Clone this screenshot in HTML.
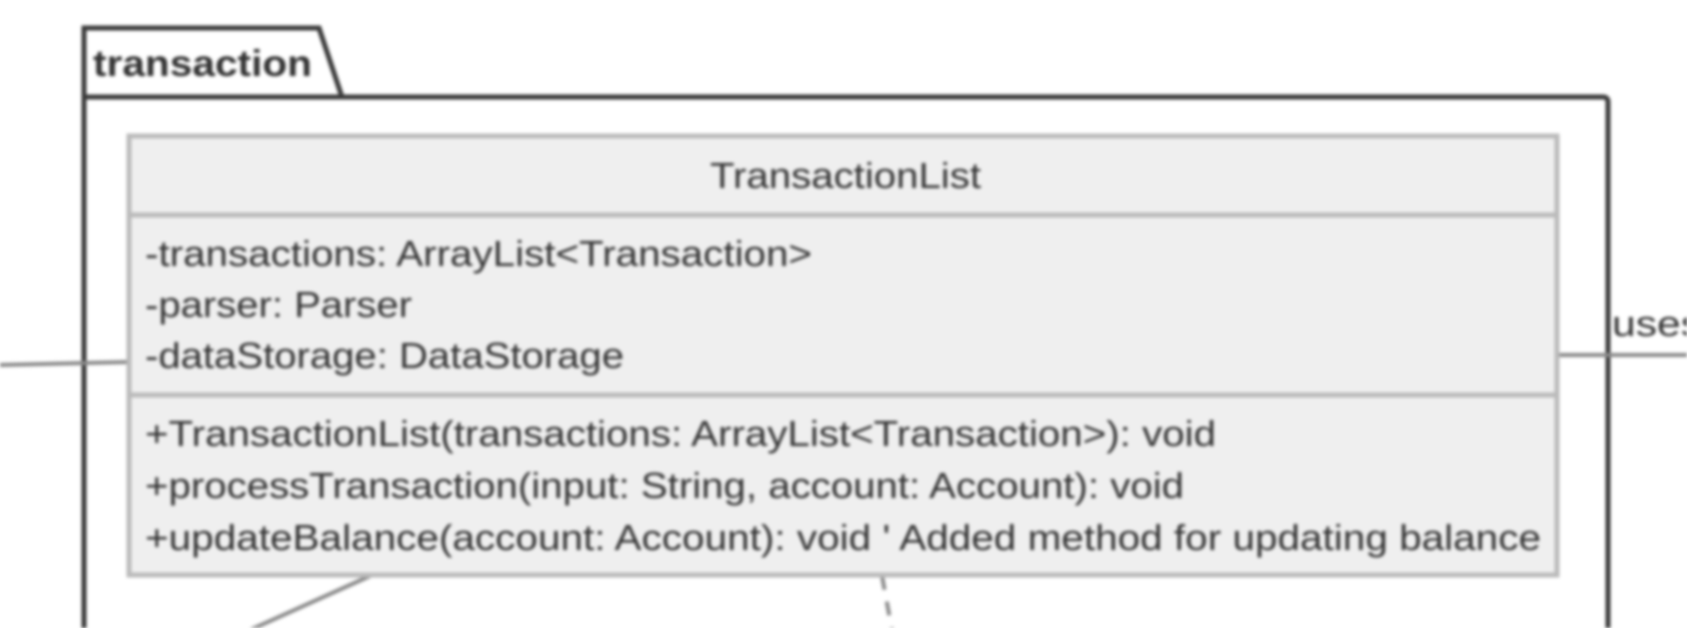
<!DOCTYPE html>
<html><head><meta charset="utf-8"><style>
html,body{margin:0;padding:0;background:#fff;width:1687px;height:628px;overflow:hidden}
svg{display:block;filter:blur(1.5px)}
text{font-family:"Liberation Sans",Arial,sans-serif;fill:#333}
</style></head><body>
<svg width="1687" height="628" viewBox="0 0 1687 628" xmlns="http://www.w3.org/2000/svg">
<path d="M84,640 L84,28 L319,28 L342,97 L1603,97 Q1608,97 1608,102 L1608,640" fill="none" stroke="#3a3a3a" stroke-width="5"/>
<line x1="84" y1="97" x2="342" y2="97" stroke="#3a3a3a" stroke-width="5"/>
<text x="93" y="76" font-size="37" font-weight="bold" textLength="219" lengthAdjust="spacingAndGlyphs">transaction</text>
<line x1="0" y1="365" x2="129" y2="362" stroke="#8a8a8a" stroke-width="4"/>
<line x1="1557" y1="355" x2="1687" y2="355" stroke="#8a8a8a" stroke-width="4"/>
<text x="1612" y="336" font-size="36" textLength="90" lengthAdjust="spacingAndGlyphs">uses</text>
<line x1="370" y1="576" x2="250" y2="630" stroke="#8a8a8a" stroke-width="4"/>
<line x1="882" y1="576" x2="892" y2="630" stroke="#8a8a8a" stroke-width="4" stroke-dasharray="14,12"/>
<rect x="129" y="136" width="1428" height="439" fill="#efefef" stroke="#bbb" stroke-width="5"/>
<line x1="129" y1="215" x2="1557" y2="215" stroke="#bbb" stroke-width="5"/>
<line x1="129" y1="395" x2="1557" y2="395" stroke="#bbb" stroke-width="5"/>
<text x="710" y="188" font-size="36" textLength="271" lengthAdjust="spacingAndGlyphs">TransactionList</text>
<text x="145" y="266" font-size="36" textLength="667" lengthAdjust="spacingAndGlyphs">-transactions: ArrayList&lt;Transaction&gt;</text>
<text x="145" y="317" font-size="36" textLength="267" lengthAdjust="spacingAndGlyphs">-parser: Parser</text>
<text x="145" y="368" font-size="36" textLength="479" lengthAdjust="spacingAndGlyphs">-dataStorage: DataStorage</text>
<text x="145" y="446" font-size="36" textLength="1071" lengthAdjust="spacingAndGlyphs">+TransactionList(transactions: ArrayList&lt;Transaction&gt;): void</text>
<text x="145" y="498" font-size="36" textLength="1039" lengthAdjust="spacingAndGlyphs">+processTransaction(input: String, account: Account): void</text>
<text x="145" y="550" font-size="36" textLength="1396" lengthAdjust="spacingAndGlyphs">+updateBalance(account: Account): void  ' Added method for updating balance</text>
</svg>
</body></html>
